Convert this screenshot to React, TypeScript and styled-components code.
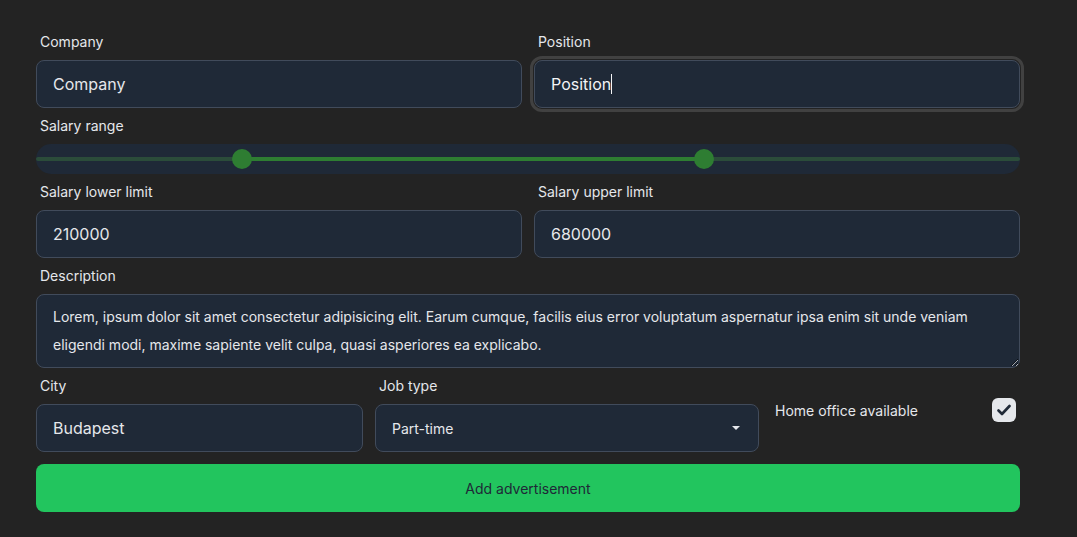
import React, { useState } from "react";
import styled, { createGlobalStyle } from "styled-components";

const Global = createGlobalStyle`
  html, body { margin: 0; padding: 0; background: #232323; }
  body { font-family: Inter, "Noto Sans", "Liberation Sans", sans-serif; color: #e5e7eb; }
  * { box-sizing: border-box; }
`;

const Form = styled.form`
  width: 984px;
  margin: 32px 0 0 36px;
  display: flex;
  flex-direction: column;
  gap: 8px;
`;

const Row = styled.div<{ $cols: string }>`
  display: grid;
  grid-template-columns: ${(p) => p.$cols};
  column-gap: 12px;
`;

const Field = styled.div`
  display: flex;
  flex-direction: column;
  gap: 8px;
`;

const Label = styled.label`
  display: block;
  padding-left: 4px;
  font-size: 14px;
  line-height: 20px;
  font-weight: 400;
  color: #e5e7eb;
`;

const InputWrap = styled.div`
  position: relative;
`;

const Input = styled.input<{ $focused?: boolean }>`
  height: 48px;
  width: 100%;
  padding: 0 16px;
  background: #1f2937;
  border: 1px solid #414b5b;
  border-radius: 8px;
  font-family: inherit;
  font-size: 16px;
  color: ${(p) => (p.$focused ? "#f3f4f6" : "#e5e7eb")};
  outline: ${(p) => (p.$focused ? "3px solid #414141" : "none")};
  outline-offset: 1px;
  caret-color: #ffffff;
  &::placeholder { color: #e5e7eb; opacity: 1; }
`;

const FakeCaret = styled.span`
  position: absolute;
  top: 14px;
  left: 77px;
  width: 1px;
  height: 20px;
  background: #f3f4f6;
`;

const SliderBox = styled.div`
  position: relative;
  height: 30px;
  background: #1f2937;
  border-radius: 15px;
`;

const Track = styled.div`
  position: absolute;
  left: 0;
  right: 0;
  top: 13px;
  height: 4px;
  background: #2b4c3a;
  border-radius: 2px;
`;

const TrackFill = styled.div`
  position: absolute;
  top: 13px;
  height: 4px;
  background: #2e7d32;
`;

const Thumb = styled.div`
  position: absolute;
  top: 5px;
  width: 20px;
  height: 20px;
  margin-left: -11px;
  border-radius: 50%;
  background: #2e7d32;
`;

const TextArea = styled.textarea`
  height: 74px;
  width: 100%;
  padding: 8px 16px;
  background: #1f2937;
  border: 1px solid #414b5b;
  border-radius: 8px;
  font-family: inherit;
  font-size: 14px;
  line-height: 28px;
  color: #e5e7eb;
  outline: none;
  resize: vertical;
  overflow: hidden;
  display: block;
`;

const SelectWrap = styled.div`
  height: 48px;
  background: #1f2937;
  border: 1px solid #414b5b;
  border-radius: 8px;
  display: flex;
  align-items: center;
  justify-content: space-between;
  padding: 0 18px 0 16px;
  font-size: 14px;
  color: #e5e7eb;
`;

const Caret = styled.span`
  width: 0;
  height: 0;
  border-left: 4px solid transparent;
  border-right: 4px solid transparent;
  border-top: 4px solid #e5e7eb;
`;

const CheckRow = styled.div`
  margin-top: 22px;
  height: 24px;
  display: flex;
  align-items: center;
  justify-content: space-between;
  padding: 0 4px;
  font-size: 14px;
  font-weight: 400;
  color: #e5e7eb;
`;

const CheckBox = styled.span`
  width: 24px;
  height: 24px;
  border-radius: 6px;
  background: #e5e7eb;
  display: flex;
  align-items: center;
  justify-content: center;
`;

const SubmitButton = styled.button`
  margin-top: 4px;
  height: 48px;
  width: 100%;
  border: none;
  border-radius: 8px;
  background: #22c55e;
  color: #1f2937;
  font-family: inherit;
  font-size: 14px;
  font-weight: 400;
`;

const MAX = 1000000;

export default function App() {
  const [lower] = useState(210000);
  const [upper] = useState(680000);
  const lp = (lower / MAX) * 100;
  const up = (upper / MAX) * 100;

  return (
    <>
      <Global />
      <Form onSubmit={(e) => e.preventDefault()}>
        <Row $cols="1fr 1fr">
          <Field>
            <Label>Company</Label>
            <Input placeholder="Company" />
          </Field>
          <Field>
            <Label>Position</Label>
            <InputWrap>
              <Input $focused defaultValue="Position" />
              <FakeCaret />
            </InputWrap>
          </Field>
        </Row>
        <Field>
          <Label>Salary range</Label>
          <SliderBox>
            <Track />
            <TrackFill style={{ left: `${lp}%`, width: `${up - lp}%` }} />
            <Thumb style={{ left: `${lp}%` }} />
            <Thumb style={{ left: `${up}%` }} />
          </SliderBox>
        </Field>
        <Row $cols="1fr 1fr">
          <Field>
            <Label>Salary lower limit</Label>
            <Input defaultValue={String(lower)} />
          </Field>
          <Field>
            <Label>Salary upper limit</Label>
            <Input defaultValue={String(upper)} />
          </Field>
        </Row>
        <Field>
          <Label>Description</Label>
          <TextArea defaultValue="Lorem, ipsum dolor sit amet consectetur adipisicing elit. Earum cumque, facilis eius error voluptatum aspernatur ipsa enim sit unde veniam eligendi modi, maxime sapiente velit culpa, quasi asperiores ea explicabo." />
        </Field>
        <Row $cols="327px 384px 1fr">
          <Field>
            <Label>City</Label>
            <Input defaultValue="Budapest" />
          </Field>
          <Field>
            <Label>Job type</Label>
            <SelectWrap>
              <span>Part-time</span>
              <Caret />
            </SelectWrap>
          </Field>
          <CheckRow>
            <span>Home office available</span>
            <CheckBox>
              <svg width="14" height="12" viewBox="0 0 14 12">
                <path d="M1.5 6.5 L5 10 L12.5 2" fill="none" stroke="#1f2937" strokeWidth="2.6" strokeLinecap="round" strokeLinejoin="round" />
              </svg>
            </CheckBox>
          </CheckRow>
        </Row>
        <SubmitButton type="submit">Add advertisement</SubmitButton>
      </Form>
    </>
  );
}
